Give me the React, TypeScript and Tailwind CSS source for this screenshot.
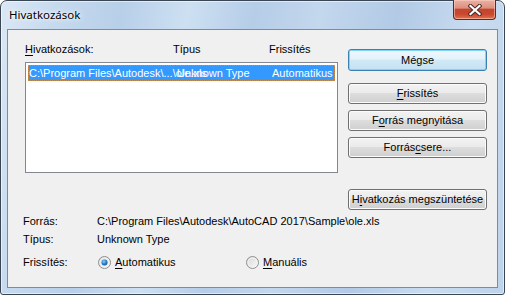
import React from 'react';

type BtnProps = { children: React.ReactNode; primary?: boolean; className?: string };

const Btn: React.FC<BtnProps> = ({ children, primary, className = '' }) => (
    <button
        type="button"
        className={
            'w-full flex items-center justify-center rounded-[3px] border text-[11px] leading-none text-black ' +
            (primary
                ? 'border-[#3c7fb1] bg-[linear-gradient(#f0f8fd_0%,#e3f2fb_45%,#d2e9f6_50%,#c4e1f2_100%)] shadow-[inset_0_0_0_1px_#7fd5f6] '
                : 'border-[#707070] bg-[linear-gradient(#f2f2f2_0%,#ebebeb_45%,#dddddd_50%,#cfcfcf_100%)] shadow-[inset_0_0_0_1px_#fbfbfb] ') +
            className
        }
    >
        {children}
    </button>
);

const U: React.FC<{ children: React.ReactNode }> = ({ children }) => (
    <span className="underline underline-offset-[2px] decoration-1">{children}</span>
);

const Radio: React.FC<{ checked?: boolean }> = ({ checked }) => (
    <svg width="13" height="13" viewBox="0 0 13 13" className="shrink-0">
        <defs>
            <linearGradient id={checked ? 'rb1' : 'rb0'} x1="0" y1="0" x2="1" y2="1">
                <stop offset="0" stopColor="#d6d6d6" />
                <stop offset="1" stopColor="#fbfbfb" />
            </linearGradient>
            <radialGradient id="dot" cx="0.4" cy="0.35" r="0.7">
                <stop offset="0" stopColor="#8fd3ff" />
                <stop offset="0.5" stopColor="#2a8ad4" />
                <stop offset="1" stopColor="#1b4f8c" />
            </radialGradient>
        </defs>
        <circle cx="6.5" cy="6.5" r="6" fill={checked ? 'url(#rb1)' : 'url(#rb0)'} stroke="#8e8f8f" />
        <circle cx="6.5" cy="6.5" r="4.5" fill="none" stroke="#f4f4f4" strokeWidth="1" />
        {checked && <circle cx="6.5" cy="6.5" r="3" fill="url(#dot)" />}
    </svg>
);

export default function App() {
    return (
        <div className="w-[505px] h-[295px] bg-white font-['Liberation_Sans',Arial,sans-serif] text-[11px] text-black">
            <div className="w-full h-full flex flex-col rounded-t-[7px] rounded-b-[3px] border border-[#3b4654] shadow-[inset_0_0_0_1px_rgba(255,255,255,0.55)] bg-[linear-gradient(100deg,#dbe8f5_0%,#c6daef_10%,#b8cfe9_22%,#cde0f2_34%,#b6cde8_46%,#c3d7ed_58%,#b2cae6_72%,#c9dcf0_86%,#bdd3eb_100%)] px-[6px] pb-[6px]">
                <div className="h-[28px] flex items-start">
                    <div className="pl-[2px] pt-[6px] font-['Noto_Sans',sans-serif] text-[11.5px] leading-[16px] [text-shadow:0_0_6px_#ffffff,0_0_3px_#ffffff]">
                        Hivatkozások
                    </div>
                    <div className="ml-auto mr-[2px] mt-[-1px] w-[43px] h-[20px] flex items-center justify-center rounded-b-[4px] border border-[#5c2a24] border-t-0 bg-[linear-gradient(#eab1a3_0%,#de907e_42%,#c2462f_50%,#c9472e_75%,#e0754f_100%)] shadow-[inset_0_0_0_1px_rgba(255,210,200,0.55)]">
                        <svg width="14" height="12" viewBox="0 0 14 12">
                            <path d="M2.5 2 L11.5 10 M11.5 2 L2.5 10" stroke="#4b2a26" strokeWidth="4.2" strokeLinecap="square" />
                            <path d="M2.5 2 L11.5 10 M11.5 2 L2.5 10" stroke="#ffffff" strokeWidth="2.2" strokeLinecap="square" />
                        </svg>
                    </div>
                </div>

                <div className="flex-1 border border-[#7b8ca2] bg-[#f0f0f0] pl-[15px] pt-[13px]">
                    <div className="flex ml-[2px]">
                        <div className="w-[313px] flex flex-col">
                            <div className="flex h-[13px] leading-[13px]">
                                <div className="w-[148px]"><U>H</U>ivatkozások:</div>
                                <div className="w-[96px]">Típus</div>
                                <div>Frissítés</div>
                            </div>
                            <div className="mt-[6px] h-[111px] border border-[#828790] bg-white pt-[2px] px-[2px]">
                                <div className="flex h-[16px] items-center bg-[#3399ff] border border-dotted border-[#c98a4a] text-white whitespace-nowrap leading-[13px]">
                                    <div className="w-[148px] overflow-visible">C:\Program Files\Autodesk\...\ole.xls</div>
                                    <div className="w-[95px]">Unknown Type</div>
                                    <div>Automatikus</div>
                                </div>
                            </div>
                        </div>
                        <div className="ml-[10px] w-[139px] flex flex-col pt-[6px]">
                            <Btn primary className="h-[22px]">Mégse</Btn>
                            <Btn className="h-[21px] mt-[12px]"><span><U>F</U>rissítés</span></Btn>
                            <Btn className="h-[21px] mt-[6px]"><span>F<U>o</U>rrás megnyitása</span></Btn>
                            <Btn className="h-[21px] mt-[6px]"><span>Forrás<U>c</U>sere...</span></Btn>
                        </div>
                    </div>

                    <div className="flex mt-[16px] ml-[325px] w-[139px]">
                        <Btn className="h-[21px]"><span>H<U>i</U>vatkozás megszüntetése</span></Btn>
                    </div>

                    <div className="flex mt-[5px] h-[13px] leading-[13px]">
                        <div className="w-[74px]">Forrás:</div>
                        <div>C:\Program Files\Autodesk\AutoCAD 2017\Sample\ole.xls</div>
                    </div>
                    <div className="flex mt-[5px] h-[13px] leading-[13px]">
                        <div className="w-[74px]">Típus:</div>
                        <div>Unknown Type</div>
                    </div>
                    <div className="flex mt-[10px] h-[13px] leading-[13px] items-center">
                        <div className="w-[74px]">Frissítés:</div>
                        <div className="w-[148px] flex items-center gap-[4px] ml-[1px]">
                            <Radio checked />
                            <span><U>A</U>utomatikus</span>
                        </div>
                        <div className="flex items-center gap-[4px]">
                            <Radio />
                            <span><U>M</U>anuális</span>
                        </div>
                    </div>
                </div>
            </div>
        </div>
    );
}
